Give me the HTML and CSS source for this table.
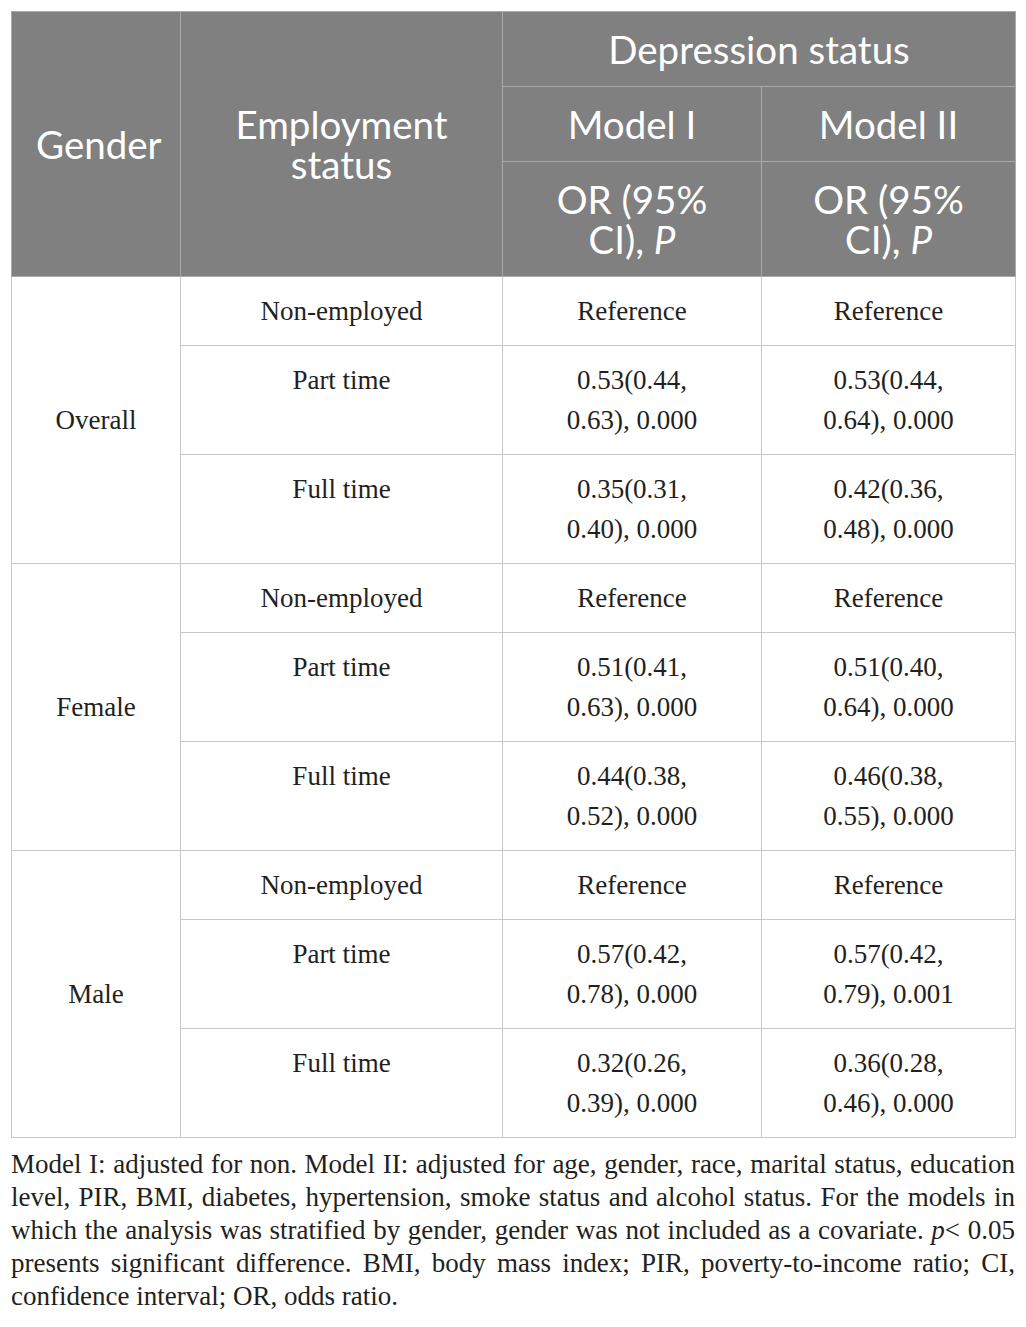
FILE: index.html
```html
<!DOCTYPE html>
<html lang="en">
<head>
<meta charset="UTF-8" />
<title>Employment status and depression by gender</title>
<link rel="stylesheet" href="styles.css">
</head>
<body>

<div class="page">

  <table class="results">
    <colgroup>
      <col class="c-gender">
      <col class="c-emp">
      <col class="c-m1">
      <col class="c-m2">
    </colgroup>
    <thead>
      <tr>
        <th rowspan="3">Gender</th>
        <th rowspan="3">Employment status</th>
        <th colspan="2">Depression status</th>
      </tr>
      <tr>
        <th>Model I</th>
        <th>Model II</th>
      </tr>
      <tr>
        <th>OR (95% CI), <i>P</i></th>
        <th>OR (95% CI), <i>P</i></th>
      </tr>
    </thead>
    <tbody>
      <!-- Overall -->
      <tr>
        <td class="group" rowspan="3">Overall</td>
        <td>Non-employed</td>
        <td>Reference</td>
        <td>Reference</td>
      </tr>
      <tr>
        <td>Part time</td>
        <td>0.53(0.44,<br>0.63), 0.000</td>
        <td>0.53(0.44,<br>0.64), 0.000</td>
      </tr>
      <tr>
        <td>Full time</td>
        <td>0.35(0.31,<br>0.40), 0.000</td>
        <td>0.42(0.36,<br>0.48), 0.000</td>
      </tr>

      <!-- Female -->
      <tr>
        <td class="group" rowspan="3">Female</td>
        <td>Non-employed</td>
        <td>Reference</td>
        <td>Reference</td>
      </tr>
      <tr>
        <td>Part time</td>
        <td>0.51(0.41,<br>0.63), 0.000</td>
        <td>0.51(0.40,<br>0.64), 0.000</td>
      </tr>
      <tr>
        <td>Full time</td>
        <td>0.44(0.38,<br>0.52), 0.000</td>
        <td>0.46(0.38,<br>0.55), 0.000</td>
      </tr>

      <!-- Male -->
      <tr>
        <td class="group" rowspan="3">Male</td>
        <td>Non-employed</td>
        <td>Reference</td>
        <td>Reference</td>
      </tr>
      <tr>
        <td>Part time</td>
        <td>0.57(0.42,<br>0.78), 0.000</td>
        <td>0.57(0.42,<br>0.79), 0.001</td>
      </tr>
      <tr>
        <td>Full time</td>
        <td>0.32(0.26,<br>0.39), 0.000</td>
        <td>0.36(0.28,<br>0.46), 0.000</td>
      </tr>
    </tbody>
  </table>

  <p class="note">Model I: adjusted for non. Model II: adjusted for age, gender, race, marital status, education level, PIR, BMI, diabetes, hypertension, smoke status and alcohol status. For the models in which the analysis was stratified by gender, gender was not included as a covariate. <i>p</i>&lt; 0.05 presents significant difference. BMI, body mass index; PIR, poverty-to-income ratio; CI, confidence interval; OR, odds ratio.</p>

</div>

</body>
</html>
```

FILE: styles.css
```css
body {
  margin: 0;
  background: #fff;
  font-family: "Liberation Serif", "Times New Roman", serif;
  color: #231f20;
}
.page {
  padding: 11px 11px 0;
  width: 1004px;
}
.results {
  width: 1004px;
  border-collapse: collapse;
  table-layout: fixed;
}
.c-gender { width: 169px; }
.c-emp { width: 322px; }
.c-m1 { width: 259px; }
.c-m2 { width: 254px; }

.results th {
  background: #808080;
  color: #fff;
  font-family: Lato, "Open Sans", sans-serif;
  font-weight: normal;
  font-size: 38.5px;
  line-height: 40px;
  padding: 17px 24px;
  border: 1px solid #ababab;
  text-align: center;
  vertical-align: middle;
}
.results td {
  font-size: 27px;
  line-height: 40px;
  padding: 14px 10px;
  border: 1px solid #c8c8c8;
  text-align: center;
  vertical-align: top;
}
.results td.group {
  vertical-align: middle;
}
.note {
  margin: 10px 0 0;
  font-size: 27px;
  line-height: 33px;
  text-align: justify;
}
```
